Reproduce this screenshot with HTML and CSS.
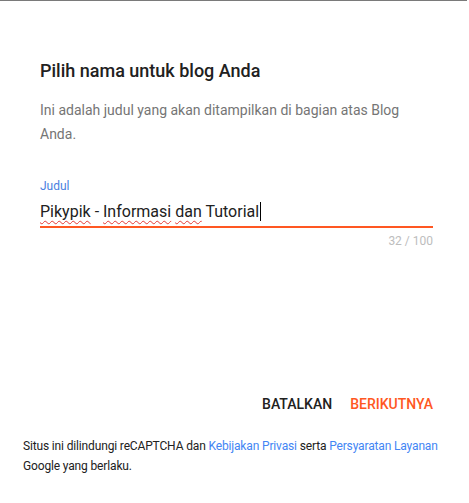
FILE: index.html
```html
<!DOCTYPE html>
<html lang="id">
<head>
<meta charset="utf-8">
<link rel="stylesheet" href="styles.css">
</head>
<body>
<div class="dialog">
  <div class="content">
    <h1 class="title">Pilih nama untuk blog Anda</h1>
    <p class="desc">Ini adalah judul yang akan ditampilkan di bagian atas Blog Anda.</p>
    <div class="field">
      <div class="label">Judul</div>
      <div class="input"><span class="sp">Pikypik</span> - <span class="sp">Informasi</span> <span class="sp">dan</span> Tutorial<span class="caret"></span></div>
      <div class="counter">32 / 100</div>
    </div>
  </div>
  <div class="actions">
    <span class="btn cancel">BATALKAN</span>
    <span class="btn next">BERIKUTNYA</span>
  </div>
  <div class="footer">Situs ini dilindungi reCAPTCHA dan <span class="link">Kebijakan Privasi</span> serta <span class="link">Persyaratan Layanan</span> Google yang berlaku.</div>
</div>
</body>
</html>
```

FILE: styles.css
```css
html, body {
  margin: 0;
  padding: 0;
  background: #ffffff;
}
body {
  font-family: Roboto, "Noto Sans", Arial, sans-serif;
  width: 469px;
  height: 503px;
  overflow: hidden;
}
.dialog {
  border-top: 1px solid #7a7a7a;
  margin-right: 2px;
  height: 502px;
  display: flex;
  flex-direction: column;
}
.content {
  padding: 58px 34px 0 40px;
}
.title {
  margin: 0;
  font-size: 18px;
  font-weight: 500;
  line-height: 24px;
  color: #212121;
}
.desc {
  margin: 15px 0 0;
  font-size: 14px;
  line-height: 24px;
  color: #757575;
}
.field {
  margin-top: 33px;
}
.label {
  font-size: 12px;
  line-height: 14px;
  color: #4a7fe0;
}
.input {
  margin-top: 8px;
  font-size: 16px;
  line-height: 22px;
  color: #212121;
  border-bottom: 2px solid #ff5722;
  padding-bottom: 3px;
}
.sp {
  text-decoration: underline wavy #e53935;
  text-decoration-thickness: 1px;
  text-underline-offset: 3px;
}
.caret {
  display: inline-block;
  width: 1px;
  height: 19px;
  background: #000;
  vertical-align: -4px;
  margin-left: 1px;
}
.counter {
  text-align: right;
  font-size: 12px;
  line-height: 14px;
  margin-top: 6px;
  color: #bdbdbd;
}
.actions {
  margin-top: auto;
  display: flex;
  justify-content: flex-end;
  gap: 18px;
  padding: 0 34px 0 0;
}
.btn {
  font-size: 14px;
  font-weight: 500;
  line-height: 18px;
}
.cancel { color: #212121; }
.next { color: #ff5722; }
.footer {
  margin: 23px 0 27px;
  padding: 0 4px 0 23px;
  font-size: 12px;
  line-height: 20px;
  color: #212121;
  letter-spacing: -0.15px;
}
.link { color: #4285f4; }
```
